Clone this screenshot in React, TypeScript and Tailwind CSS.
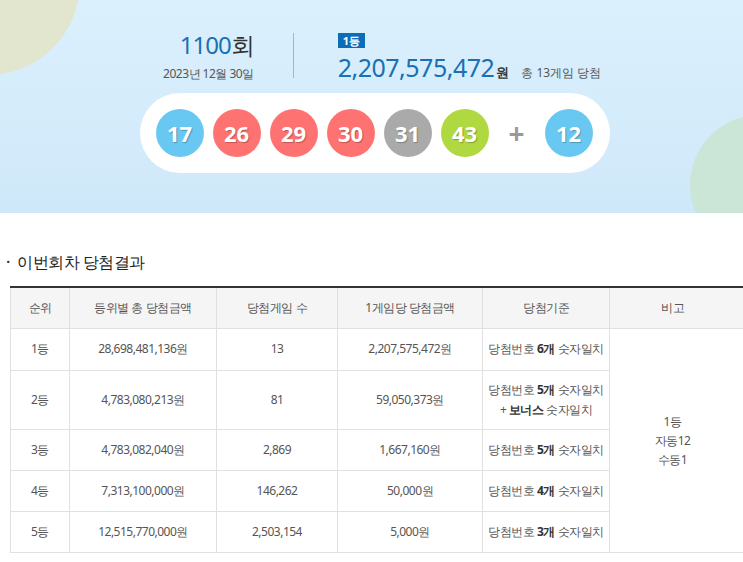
import React from "react";

const balls: [string, string][] = [
  ["17", "bg-[#69c8f2]"],
  ["26", "bg-[#ff7272]"],
  ["29", "bg-[#ff7272]"],
  ["30", "bg-[#ff7272]"],
  ["31", "bg-[#aaaaaa]"],
  ["43", "bg-[#b0d840]"],
];

function Ball({ n, c }: { n: string; c: string }) {
  return (
    <div className={`w-[48px] h-[48px] rounded-full ${c} flex items-center justify-center text-white text-[22px] font-bold [text-shadow:1px_1px_1px_rgba(0,0,0,0.25)]`}>
      {n}
    </div>
  );
}

const rows = [
  ["1등", "28,698,481,136원", "13", "2,207,575,472원", <>당첨번호 <b className="text-[#333]">6개</b> 숫자일치</>, "h-[42px]"],
  ["2등", "4,783,080,213원", "81", "59,050,373원", <>당첨번호 <b className="text-[#333]">5개</b> 숫자일치<br />+ <b className="text-[#333]">보너스</b> 숫자일치</>, "h-[59px]"],
  ["3등", "4,783,082,040원", "2,869", "1,667,160원", <>당첨번호 <b className="text-[#333]">5개</b> 숫자일치</>, "h-[41px]"],
  ["4등", "7,313,100,000원", "146,262", "50,000원", <>당첨번호 <b className="text-[#333]">4개</b> 숫자일치</>, "h-[41px]"],
  ["5등", "12,515,770,000원", "2,503,154", "5,000원", <>당첨번호 <b className="text-[#333]">3개</b> 숫자일치</>, "h-[41px]"],
] as const;

export default function App() {
  const td = "border border-[#e0e0e0] p-0 text-center text-[12px] leading-[18px] text-[#555] tracking-[-0.5px]";
  return (
    <div className="w-[743px] h-[562px] overflow-hidden bg-white font-['Noto_Sans_CJK_KR','Noto_Sans',sans-serif]">
      <div className="relative h-[213px] overflow-hidden bg-gradient-to-b from-[#dbf0fd] to-[#cfe8f9]">
        <div className="absolute left-[-110px] top-[-110px] w-[190px] h-[185px] rounded-full bg-[#e2e6cf]" />
        <div className="absolute left-[690px] top-[115px] w-[140px] h-[140px] rounded-full bg-[#cbe6d6]" />
        <div className="relative flex flex-col items-center pt-[27px]">
          <div className="flex items-start ml-[20px]">
            <div className="w-[131px] pt-[4px] text-right pr-[39px]">
              <div className="text-[24px] leading-[28px] text-[#1a6fb5] tracking-[-1px]">1100<span className="text-[#333]">회</span></div>
              <div className="text-[12px] text-[#555] tracking-[-0.5px] mt-[6px] whitespace-nowrap">2023년 12월 30일</div>
            </div>
            <div className="w-px h-[45px] bg-[#9bb8cc] mt-[6px]" />
            <div className="pl-[44px]">
              <div className="inline-block bg-[#0c6cb8] text-white text-[11px] font-bold leading-[15px] px-[5px]">1등</div>
              <div className="flex items-baseline mt-[2px] whitespace-nowrap">
                <span className="text-[25px] leading-[28px] text-[#1a6fb5] tracking-[-0.5px]">2,207,575,472</span>
                <span className="text-[13px] font-bold text-[#333] ml-[2px]">원</span>
                <span className="text-[12px] text-[#555] ml-[12px]">총 13게임 당첨</span>
              </div>
            </div>
          </div>
          <div className="mt-[10px] w-[470px] h-[80px] bg-white rounded-full flex items-center pl-[16px] gap-[9px] ml-[6px]">
            {balls.map(([n, c]) => <Ball key={n} n={n} c={c} />)}
            <div className="w-[38px] text-center text-[28px] text-[#999] font-bold">+</div>
            <Ball n="12" c="bg-[#69c8f2]" />
          </div>
        </div>
      </div>
      <div className="pt-[38px] pl-[6px] text-[16px] leading-[22px] text-[#222] font-medium tracking-[-0.5px]">·&nbsp; 이번회차 당첨결과</div>
      <table className="ml-[10px] mt-[13px] w-[743px] table-fixed border-collapse border-t-2 border-t-[#333]">
        <colgroup>
          <col className="w-[59px]" />
          <col className="w-[147px]" />
          <col className="w-[121px]" />
          <col className="w-[145px]" />
          <col className="w-[127px]" />
          <col className="w-[144px]" />
        </colgroup>
        <thead>
          <tr className="h-[41px] bg-[#f5f5f5]">
            {["순위", "등위별 총 당첨금액", "당첨게임 수", "1게임당 당첨금액", "당첨기준", "비고"].map((t, i) => (
              <th key={t} className={`${td} font-normal text-[#333] ${i === 5 ? "pr-[18px]" : ""}`}>{t}</th>
            ))}
          </tr>
        </thead>
        <tbody>
          {rows.map((r, i) => (
            <tr key={i} className={r[5]}>
              <td className={td}>{r[0]}</td>
              <td className={td}>{r[1]}</td>
              <td className={td}>{r[2]}</td>
              <td className={td}>{r[3]}</td>
              <td className={`${td} leading-[20px]`}>{r[4]}</td>
              {i === 0 && (
                <td rowSpan={5} className={`${td} leading-[19px] pr-[18px]`}>1등<br />자동12<br />수동1</td>
              )}
            </tr>
          ))}
        </tbody>
      </table>
    </div>
  );
}
